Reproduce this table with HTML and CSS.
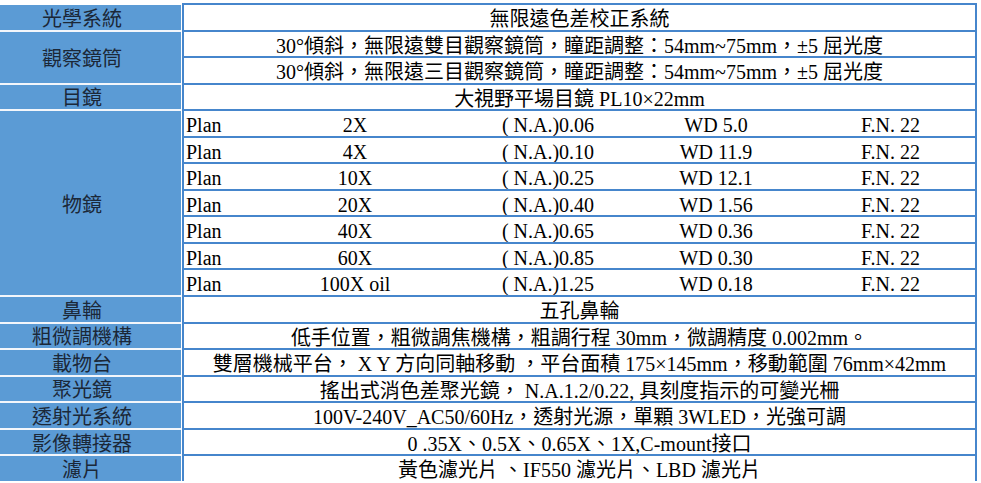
FILE: index.html
```html
<!DOCTYPE html>
<html lang="zh-Hant">
<head>
<meta charset="utf-8">
<link rel="stylesheet" href="styles.css">
<title>規格</title>
</head>
<body>
<div class="spec">
  <div class="row">
    <div class="label">光學系統</div>
    <div class="value"><div class="line">無限遠色差校正系統</div></div>
  </div>
  <div class="row">
    <div class="label">觀察鏡筒</div>
    <div class="value">
      <div class="line">30°傾斜，無限遠雙目觀察鏡筒，瞳距調整：54mm~75mm，±5 屈光度</div>
      <div class="line">30°傾斜，無限遠三目觀察鏡筒，瞳距調整：54mm~75mm，±5 屈光度</div>
    </div>
  </div>
  <div class="row">
    <div class="label">目鏡</div>
    <div class="value"><div class="line">大視野平場目鏡 PL10×22mm</div></div>
  </div>
  <div class="row">
    <div class="label">物鏡</div>
    <div class="value">
      <div class="line obj"><span class="c-a">Plan</span><span class="c-b">2X</span><span class="c-c">( N.A.)0.06</span><span class="c-d">WD 5.0</span><span class="c-e">F.N. 22</span></div>
      <div class="line obj"><span class="c-a">Plan</span><span class="c-b">4X</span><span class="c-c">( N.A.)0.10</span><span class="c-d">WD 11.9</span><span class="c-e">F.N. 22</span></div>
      <div class="line obj"><span class="c-a">Plan</span><span class="c-b">10X</span><span class="c-c">( N.A.)0.25</span><span class="c-d">WD 12.1</span><span class="c-e">F.N. 22</span></div>
      <div class="line obj"><span class="c-a">Plan</span><span class="c-b">20X</span><span class="c-c">( N.A.)0.40</span><span class="c-d">WD 1.56</span><span class="c-e">F.N. 22</span></div>
      <div class="line obj"><span class="c-a">Plan</span><span class="c-b">40X</span><span class="c-c">( N.A.)0.65</span><span class="c-d">WD 0.36</span><span class="c-e">F.N. 22</span></div>
      <div class="line obj"><span class="c-a">Plan</span><span class="c-b">60X</span><span class="c-c">( N.A.)0.85</span><span class="c-d">WD 0.30</span><span class="c-e">F.N. 22</span></div>
      <div class="line obj"><span class="c-a">Plan</span><span class="c-b">100X oil</span><span class="c-c">( N.A.)1.25</span><span class="c-d">WD 0.18</span><span class="c-e">F.N. 22</span></div>
    </div>
  </div>
  <div class="row">
    <div class="label">鼻輪</div>
    <div class="value"><div class="line">五孔鼻輪</div></div>
  </div>
  <div class="row">
    <div class="label">粗微調機構</div>
    <div class="value"><div class="line">低手位置，粗微調焦機構，粗調行程 30mm，微調精度 0.002mm。</div></div>
  </div>
  <div class="row">
    <div class="label">載物台</div>
    <div class="value"><div class="line">雙層機械平台， X Y 方向同軸移動 ，平台面積 175×145mm，移動範圍 76mm×42mm</div></div>
  </div>
  <div class="row">
    <div class="label">聚光鏡</div>
    <div class="value"><div class="line">搖出式消色差聚光鏡， N.A.1.2/0.22, 具刻度指示的可變光柵</div></div>
  </div>
  <div class="row">
    <div class="label">透射光系統</div>
    <div class="value"><div class="line">100V-240V_AC50/60Hz，透射光源，單顆 3WLED，光強可調</div></div>
  </div>
  <div class="row">
    <div class="label">影像轉接器</div>
    <div class="value"><div class="line">0 .35X、0.5X、0.65X、1X,C-mount接口</div></div>
  </div>
  <div class="row">
    <div class="label">濾片</div>
    <div class="value"><div class="line">黃色濾光片 、IF550 濾光片、LBD 濾光片</div></div>
  </div>
</div>
</body>
</html>
```
FILE: styles.css
```css
html, body {
  margin: 0;
  padding: 0;
  background: #ffffff;
}

body {
  font-family: "Liberation Serif", "Noto Sans CJK TC", serif;
  font-size: 20px;
  color: #000000;
  padding-top: 3px;
}

.spec {
  display: flex;
  flex-direction: column;
  width: 977px;
}

.row {
  display: flex;
}

.label {
  width: 181px;
  flex: none;
  margin-right: 1px;
  box-sizing: border-box;
  padding-right: 17px;
  padding-top: 3px;
  background: #5b9bd5;
  border-top: 2px solid #f3f6fb;
  color: #1b2838;
  line-height: 20px;
  display: flex;
  align-items: center;
  justify-content: center;
  overflow: visible;
}

.row:first-child .label {
  border-top-color: #ffffff;
}

.value {
  flex: 1;
  border-left: 2px solid #4686cc;
  border-right: 2px solid #4686cc;
  display: flex;
  flex-direction: column;
}

.line {
  box-sizing: border-box;
  height: 26.55px;
  border-top: 2px solid #4686cc;
  padding-top: 3px;
  line-height: 22px;
  text-align: center;
  white-space: nowrap;
  overflow: visible;
}

.obj {
  display: grid;
  grid-template-columns: 56px 230px 156px 180px 1fr;
  text-align: center;
}

.obj .c-a {
  text-align: left;
  padding-left: 2px;
}
```
